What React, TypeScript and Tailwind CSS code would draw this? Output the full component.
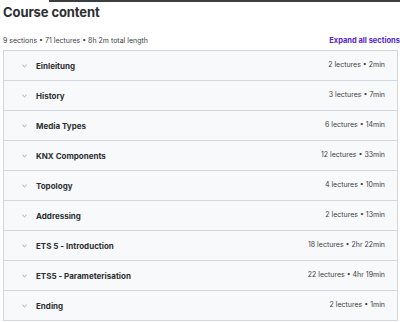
import React from "react";

const sections = [
  { title: "Einleitung", meta: "2 lectures • 2min" },
  { title: "History", meta: "3 lectures • 7min" },
  { title: "Media Types", meta: "6 lectures • 14min" },
  { title: "KNX Components", meta: "12 lectures • 33min" },
  { title: "Topology", meta: "4 lectures • 10min" },
  { title: "Addressing", meta: "2 lectures • 13min" },
  { title: "ETS 5 - Introduction", meta: "18 lectures • 2hr 22min" },
  { title: "ETS5 - Parameterisation", meta: "22 lectures • 4hr 19min" },
  { title: "Ending", meta: "2 lectures • 1min" },
];

function Chevron() {
  return (
    <svg width="5" height="4" viewBox="0 0 5 4" className="shrink-0">
      <path d="M0.7 1.1 L2.5 2.8 L4.3 1.1" fill="none" stroke="#8a8f93" strokeWidth="0.8" strokeLinecap="round" strokeLinejoin="round" />
    </svg>
  );
}

export default function App() {
  return (
    <div
      className="w-[400px] h-[322px] bg-white overflow-hidden text-[#2d2f31]"
      style={{ fontFamily: "Inter, 'Noto Sans', sans-serif" }}
    >
      <div className="ml-[49px] h-[2px] bg-[#3b3d3f]" />
      <h2 className="pl-[3px] mt-[2px] text-[13px] leading-[16px] font-bold tracking-[-0.1px]">Course content</h2>
      <div className="flex items-center justify-between pl-[3px] mt-[16px] h-[10px]">
        <span className="text-[7px] text-[#3e4143]">9 sections • 71 lectures • 8h 2m total length</span>
        <span className="text-[7.5px] font-bold text-[#5624d0]">Expand all sections</span>
      </div>
      <div className="ml-[3px] mr-[2px] mt-[4px] border border-[#d1d7dc] border-b-0">
        {sections.map((s) => (
          <div
            key={s.title}
            className="flex items-center h-[30px] bg-[#f7f9fa] border-b border-[#d1d7dc] pl-[18px] pr-[12px]"
          >
            <Chevron />
            <span className="ml-[9px] text-[8px] font-bold text-[#2d2f31]">{s.title}</span>
            <span className="ml-auto text-[7px] text-[#3e4143]">{s.meta}</span>
          </div>
        ))}
      </div>
    </div>
  );
}
